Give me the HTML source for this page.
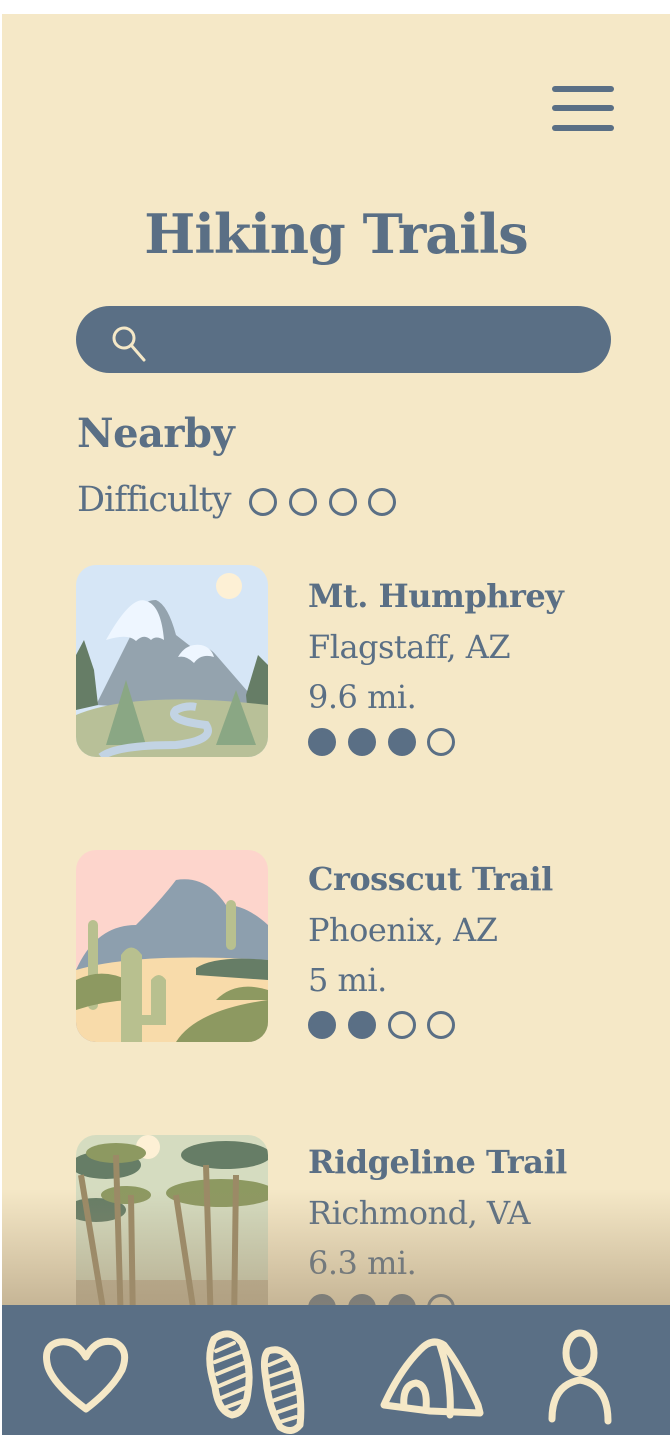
<!DOCTYPE html>
<html><head><meta charset="utf-8"><style>
*{margin:0;padding:0;box-sizing:border-box}
body{width:670px;height:1435px;background:#fff;position:relative;overflow:hidden;font-family:"DejaVu Serif","Liberation Serif",serif;color:#5a6f85}
#pg{position:absolute;left:2px;top:14px;width:668px;height:1421px;background:#f5e8c7;overflow:hidden}
.a{position:absolute}
.bar{position:absolute;left:550px;width:62px;height:6px;border-radius:3px;background:#5a6f85}
.t{position:absolute;white-space:nowrap}
.nm{font-weight:bold;font-size:32px;letter-spacing:-0.5px}
.ln{font-size:32px;font-weight:300;letter-spacing:-0.5px}
.dot{position:absolute;width:28px;height:28px;border-radius:50%;border:3px solid #5a6f85}
.f{background:#5a6f85}
.img{position:absolute;left:74px;width:192px;height:192px;border-radius:20px;overflow:hidden}
</style></head><body><div id="pg">
<div class="bar" style="top:72px"></div><div class="bar" style="top:91px"></div><div class="bar" style="top:111px"></div>
<div class="t" style="left:0;width:668px;text-align:center;top:188px;font-size:54px;font-weight:bold;letter-spacing:-1px">Hiking Trails</div>
<div class="a" style="left:74px;top:292px;width:535px;height:67px;border-radius:34px;background:#5a6f85"></div>
<svg class="a" style="left:104px;top:306px" width="44" height="44"><circle cx="18" cy="18" r="10" fill="none" stroke="#f5e8c7" stroke-width="3"/><line x1="25" y1="25" x2="38" y2="40" stroke="#f5e8c7" stroke-width="3" stroke-linecap="round"/></svg>
<div class="t" style="left:75px;top:396px;font-size:40px;font-weight:bold;letter-spacing:-0.5px">Nearby</div>
<div class="t" style="left:75px;top:466px;font-size:35px;font-weight:300;letter-spacing:-1px">Difficulty</div>
<div class="dot" style="left:247px;top:474px"></div><div class="dot" style="left:287px;top:474px"></div><div class="dot" style="left:327px;top:474px"></div><div class="dot" style="left:366px;top:474px"></div>

<div class="img" style="top:551px"><svg width="192" height="192" viewBox="0 0 192 192">
<rect width="192" height="192" fill="#d6e6f6"/><circle cx="153" cy="21" r="13" fill="#fdf0d5"/>
<path d="M20 140 L60 60 Q62 35 80 35 Q92 40 100 70 L118 84 Q130 78 140 90 L192 150 Z" fill="#94a3ae"/>
<path d="M30 75 Q55 30 70 36 Q85 40 88 75 Q80 70 75 75 Q68 68 60 76 Q52 68 30 75Z" fill="#eef6ff"/>
<path d="M102 92 Q110 78 125 80 Q135 82 138 92 Q125 88 118 98 Q110 90 102 92Z" fill="#eef6ff"/>
<path d="M0 90 L8 75 L18 105 L22 140 L0 145Z" fill="#667d66"/><path d="M192 100 L182 90 L170 130 L172 150 L192 150Z" fill="#667d66"/>
<path d="M0 150 Q60 125 192 140 L192 192 L0 192Z" fill="#b8c098"/>
<path d="M30 180 L50 115 L70 180Z" fill="#8aa784"/><path d="M140 180 L160 125 L180 180Z" fill="#8aa784"/>
<path d="M25 192 Q40 180 100 180 Q140 175 130 160 Q90 155 100 145 Q110 140 120 142" fill="none" stroke="#c2d3e3" stroke-width="8"/>
</svg></div>
<div class="t nm" style="left:306px;top:563px">Mt. Humphrey</div>
<div class="t ln" style="left:306px;top:614px">Flagstaff, AZ</div>
<div class="t ln" style="left:306px;top:664px">9.6 mi.</div>
<div class="dot f" style="left:306px;top:714px"></div><div class="dot f" style="left:346px;top:714px"></div><div class="dot f" style="left:386px;top:714px"></div><div class="dot" style="left:425px;top:714px"></div>

<div class="img" style="top:836px"><svg width="192" height="192" viewBox="0 0 192 192">
<rect width="192" height="192" fill="#fdd5cc"/>
<path d="M0 120 Q20 75 60 75 Q85 50 100 30 Q130 25 150 55 Q170 55 192 75 L192 192 L0 192Z" fill="#8d9fae"/>
<path d="M0 120 Q60 102 192 110 L192 192 L0 192Z" fill="#f8dbaa"/>
<rect x="12" y="70" width="10" height="90" rx="5" fill="#b8c08f"/><rect x="150" y="50" width="10" height="50" rx="5" fill="#b8c08f"/>
<path d="M0 130 Q30 115 60 135 L60 150 Q30 150 0 160Z" fill="#8d9961"/>
<path d="M120 118 Q140 105 192 110 L192 130 L120 125Z" fill="#667d66"/>
<path d="M140 150 Q160 130 192 140 L192 150Z" fill="#8d9961"/>
<path d="M100 192 Q120 160 192 150 L192 192Z" fill="#8d9961"/>
<path d="M45 192 L45 105 Q55 90 66 105 L66 165 L75 165 L75 130 Q83 120 90 130 L90 175 L66 175 L66 192Z" fill="#b8c08f"/>
</svg></div>
<div class="t nm" style="left:306px;top:846px">Crosscut Trail</div>
<div class="t ln" style="left:306px;top:897px">Phoenix, AZ</div>
<div class="t ln" style="left:306px;top:947px">5 mi.</div>
<div class="dot f" style="left:306px;top:997px"></div><div class="dot f" style="left:346px;top:997px"></div><div class="dot" style="left:386px;top:997px"></div><div class="dot" style="left:425px;top:997px"></div>

<div class="img" style="top:1121px"><svg width="194" height="192" viewBox="0 0 194 192">
<rect width="194" height="192" fill="#d5dcc0"/><circle cx="72" cy="12" r="12" fill="#fdf0d5"/>
<ellipse cx="30" cy="30" rx="35" ry="14" fill="#667d66"/><ellipse cx="150" cy="20" rx="45" ry="14" fill="#667d66"/>
<ellipse cx="20" cy="75" rx="30" ry="12" fill="#667d66"/><ellipse cx="145" cy="58" rx="55" ry="14" fill="#8d9961"/>
<ellipse cx="40" cy="18" rx="30" ry="10" fill="#8d9961"/><ellipse cx="50" cy="60" rx="25" ry="9" fill="#8d9961"/>
<rect x="0" y="145" width="194" height="50" fill="#c5b99b"/>
<g stroke="#9b8a66" stroke-width="6"><line x1="40" y1="20" x2="45" y2="192"/><line x1="55" y1="60" x2="57" y2="192"/><line x1="130" y1="30" x2="135" y2="192"/><line x1="160" y1="40" x2="158" y2="192"/><line x1="100" y1="60" x2="120" y2="192"/><line x1="5" y1="40" x2="30" y2="192"/></g>
</svg></div>
<div class="t nm" style="left:306px;top:1129px">Ridgeline Trail</div>
<div class="t ln" style="left:306px;top:1180px">Richmond, VA</div>
<div class="t ln" style="left:306px;top:1230px">6.3 mi.</div>
<div class="dot f" style="left:306px;top:1280px"></div><div class="dot f" style="left:346px;top:1280px"></div><div class="dot f" style="left:386px;top:1280px"></div><div class="dot" style="left:425px;top:1280px"></div>

<div class="a" style="left:0;top:1175px;width:668px;height:116px;background:linear-gradient(rgba(160,140,110,0),rgba(160,140,110,0.55))"></div>
<div class="a" style="left:0;top:1291px;width:668px;height:130px;background:#5a6f85">
<svg width="668" height="130" fill="none" stroke="#f5e8c7" stroke-width="7" stroke-linecap="round" stroke-linejoin="round">
<path d="M84 104 Q52 80 46 62 Q40 40 58 37 Q74 35 84 52 Q94 33 112 37 Q128 44 120 65 Q110 84 84 104Z"/>
<path d="M212 34 Q228 22 240 38 Q250 62 246 86 Q244 108 230 110 Q216 106 213 82 Q203 52 212 34Z"/>
<path d="M266 46 Q283 40 293 62 Q301 95 298 120 Q290 130 278 122 Q266 100 264 74 Q260 52 266 46Z"/>
<g stroke-width="4"><path d="M214 46L232 38M213 57L239 47M215 69L242 58M217 81L243 70M219 93L243 83M222 103L241 96"/><path d="M267 60L286 52M266 72L292 63M268 84L295 75M270 96L296 87M273 108L296 100M278 117L294 112"/></g>
<g transform="translate(38,0)">
<path d="M344 100 Q360 65 380 45 Q392 32 404 40 Q420 60 438 100 L440 108 L390 106 Z"/>
<path d="M400 40 Q412 75 410 110"/><path d="M364 102 Q362 80 376 78 Q388 80 386 104"/>
</g>
<path d="M550 114 Q550 80 578 75 Q606 80 606 116"/><ellipse cx="578" cy="48" rx="14" ry="20"/>
</svg></div>
</div></body></html>
